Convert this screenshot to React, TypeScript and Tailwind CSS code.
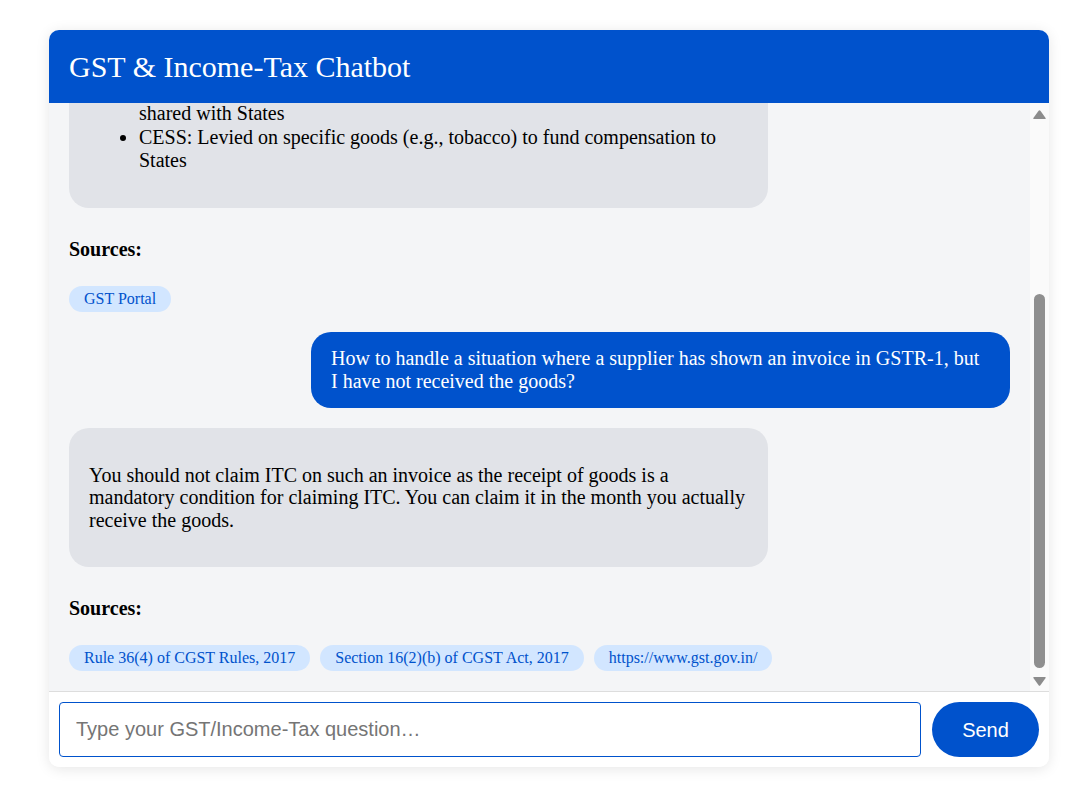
import { useLayoutEffect, useRef } from 'react'

type Msg =
  | { role: 'user'; text: string }
  | { role: 'bot'; intro?: string; text?: string; items?: string[]; sources: string[] }

const messages: Msg[] = [
  { role: 'user', text: 'What are the different types of GST in India?' },
  {
    role: 'bot',
    intro: 'There are four types of GST in India:',
    items: [
      'CGST: Central GST, collected by the Centre on intra-state supplies',
      'SGST: State GST, collected by the State on intra-state supplies',
      'IGST: Integrated GST, collected by the Centre on inter-state supplies and shared with States',
      'CESS: Levied on specific goods (e.g., tobacco) to fund compensation to States',
    ],
    sources: ['GST Portal'],
  },
  {
    role: 'user',
    text: 'How to handle a situation where a supplier has shown an invoice in GSTR-1, but I have not received the goods?',
  },
  {
    role: 'bot',
    text: 'You should not claim ITC on such an invoice as the receipt of goods is a mandatory condition for claiming ITC. You can claim it in the month you actually receive the goods.',
    sources: ['Rule 36(4) of CGST Rules, 2017', 'Section 16(2)(b) of CGST Act, 2017', 'https://www.gst.gov.in/'],
  },
]

function BotMessage({ m }: { m: Extract<Msg, { role: 'bot' }> }) {
  return (
    <div className="flex flex-col items-start">
      <div className="max-w-[699px] rounded-[20px] bg-[#e1e3e8] px-5 py-[35.5px] text-[20px] leading-[22.5px] text-black">
        {m.intro && <p className="mb-[20px]">{m.intro}</p>}
        {m.text && <p>{m.text}</p>}
        {m.items && (
          <ul className="list-disc pl-[50px] leading-[23.5px]">
            {m.items.map((it) => (
              <li key={it}>{it}</li>
            ))}
          </ul>
        )}
      </div>
      <p className="mt-[30px] text-[20px] font-bold leading-[22.5px] text-black">Sources:</p>
      <div className="mt-[25.5px] flex flex-wrap gap-[10px]">
        {m.sources.map((s) => (
          <span
            key={s}
            className="h-[26px] rounded-full bg-[#d2e6ff] px-[15px] text-[16px] leading-[26px] text-[#0052cc]"
          >
            {s}
          </span>
        ))}
      </div>
    </div>
  )
}

function Arrow({ down }: { down?: boolean }) {
  return (
    <svg width="13" height="9" viewBox="0 0 13 9" className={down ? 'rotate-180' : ''}>
      <path d="M5.6 0.8 Q6.5 -0.2 7.4 0.8 L12.6 8 Q13 9 12 9 L1 9 Q0 9 0.4 8 Z" fill="#8c8c8c" />
    </svg>
  )
}

export default function App() {
  const chatRef = useRef<HTMLDivElement>(null)

  useLayoutEffect(() => {
    const el = chatRef.current
    if (el) el.scrollTop = el.scrollHeight
  }, [])

  return (
    <div className="min-h-screen bg-white pt-[30px] font-['Liberation_Serif',serif]">
      <div className="ml-[49px] flex h-[737px] w-[1000px] flex-col overflow-hidden rounded-[10px] bg-white shadow-[0_2px_14px_rgba(0,0,0,0.1)]">
        <header className="flex h-[73px] shrink-0 items-center bg-[#0052cc] px-5 text-[30px] text-white">
          GST &amp; Income-Tax Chatbot
        </header>

        <div className="flex min-h-0 flex-1">
          <div
            ref={chatRef}
            className="min-h-0 flex-1 overflow-y-auto bg-[#f4f5f7] px-5 pt-5 pb-5 [scrollbar-width:none]"
          >
            <div className="flex flex-col gap-5">
              {messages.map((m, i) =>
                m.role === 'user' ? (
                  <div key={i} className="flex justify-end">
                    <div className="max-w-[699px] rounded-[20px] bg-[#0052cc] px-5 pt-[15px] pb-4 text-[20px] leading-[22.5px] text-white">
                      {m.text}
                    </div>
                  </div>
                ) : (
                  <BotMessage key={i} m={m} />
                )
              )}
            </div>
          </div>

          {/* scrollbar */}
          <div className="flex w-[19px] shrink-0 flex-col items-center bg-[#fafafa] pt-[7px]">
            <Arrow />
            <div className="h-[175px]" />
            <div className="h-[374px] w-[11px] rounded-full bg-[#8f8f8f]" />
            <div className="h-[9px]" />
            <Arrow down />
          </div>
        </div>

        <div className="flex shrink-0 gap-[11px] border-t border-[#dddddd] bg-white px-[10px] pt-[10px] pb-[10px]">
          <input
            autoFocus
            placeholder="Type your GST/Income-Tax question…"
            className="h-[55px] flex-1 rounded-[4px] border border-[#0052cc] px-4 font-['Liberation_Sans',sans-serif] text-[20px] text-black outline-none placeholder:text-[#757575]"
          />
          <button className="h-[55px] w-[107px] rounded-full bg-[#0052cc] font-['Liberation_Sans',sans-serif] text-[20px] text-white">
            Send
          </button>
        </div>
      </div>
    </div>
  )
}
